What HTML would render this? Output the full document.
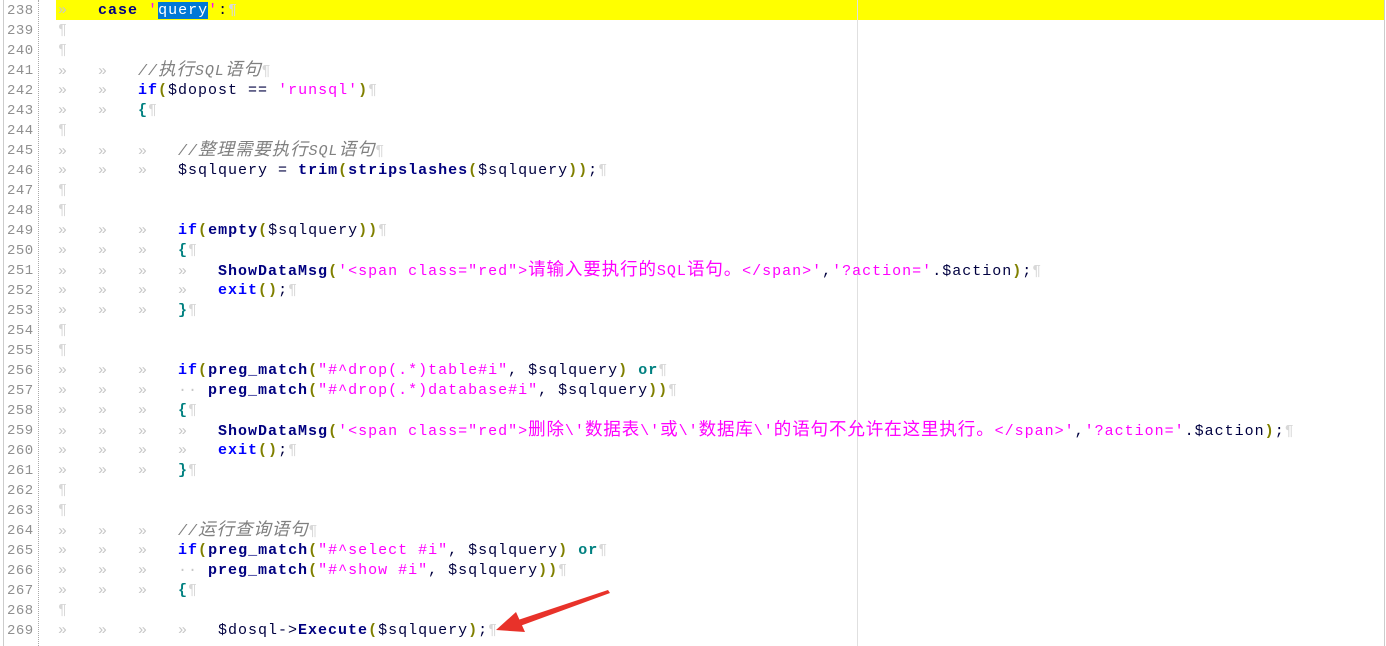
<!DOCTYPE html>
<html><head><meta charset="utf-8"><style>
body{margin:0;width:1386px;height:646px;overflow:hidden;background:#fff;position:relative;font-family:"Liberation Mono","Noto Sans CJK SC",monospace}
.g{position:absolute;left:3px;top:0;width:1px;height:646px;background:#ccc}
.d{position:absolute;left:38px;top:0;height:646px;border-left:1px dotted #aaa}
.e{position:absolute;left:857px;top:0;width:1px;height:646px;background:#e0e0e0}
.r{position:absolute;left:1384px;top:0;width:1px;height:646px;background:#ccc}
.hl{position:absolute;left:56px;top:0;width:1328px;height:20px;background:#ffff00}
.n{position:absolute;left:7px;width:31px;font-size:14px;color:#909090;line-height:20px;letter-spacing:0.5px}
.l{position:absolute;left:58px;white-space:pre;font-size:15px;letter-spacing:1px;line-height:20px;color:#000040}
.t{color:#c8c8c8;font-weight:normal}
.p{color:#d8d8d8}
.k{color:#000080;font-weight:bold}
.b{color:#0000ff;font-weight:bold}
.s{color:#ff00ff}
.c{color:#808080;font-style:italic}
.o{color:#808000;font-weight:bold}
.or{color:#008080;font-weight:bold}
.z{font-size:17.5px;letter-spacing:0.9px}
.sel{background:#0078d7;color:#fff}
</style></head><body>
<div class="hl"></div><div class="g"></div><div class="d"></div><div class="e"></div><div class="r"></div>
<div class="n" style="top:1px">238</div><div class="n" style="top:21px">239</div><div class="n" style="top:41px">240</div><div class="n" style="top:61px">241</div><div class="n" style="top:81px">242</div><div class="n" style="top:101px">243</div><div class="n" style="top:121px">244</div><div class="n" style="top:141px">245</div><div class="n" style="top:161px">246</div><div class="n" style="top:181px">247</div><div class="n" style="top:201px">248</div><div class="n" style="top:221px">249</div><div class="n" style="top:241px">250</div><div class="n" style="top:261px">251</div><div class="n" style="top:281px">252</div><div class="n" style="top:301px">253</div><div class="n" style="top:321px">254</div><div class="n" style="top:341px">255</div><div class="n" style="top:361px">256</div><div class="n" style="top:381px">257</div><div class="n" style="top:401px">258</div><div class="n" style="top:421px">259</div><div class="n" style="top:441px">260</div><div class="n" style="top:461px">261</div><div class="n" style="top:481px">262</div><div class="n" style="top:501px">263</div><div class="n" style="top:521px">264</div><div class="n" style="top:541px">265</div><div class="n" style="top:561px">266</div><div class="n" style="top:581px">267</div><div class="n" style="top:601px">268</div><div class="n" style="top:621px">269</div>
<div class="l" style="top:1px"><span class="t">»   </span><span class="k">case</span> <span class="s">'<span class="sel">query</span>'</span>:<span class="p">¶</span></div>
<div class="l" style="top:21px"><span class="p">¶</span></div>
<div class="l" style="top:41px"><span class="p">¶</span></div>
<div class="l" style="top:61px"><span class="t">»   »   </span><span class="c">//<span class="z">执行</span>SQL<span class="z">语句</span></span><span class="p">¶</span></div>
<div class="l" style="top:81px"><span class="t">»   »   </span><span class="b">if</span><span class="o">(</span>$dopost == <span class="s">'runsql'</span><span class="o">)</span><span class="p">¶</span></div>
<div class="l" style="top:101px"><span class="t">»   »   </span><span class="or">{</span><span class="p">¶</span></div>
<div class="l" style="top:121px"><span class="p">¶</span></div>
<div class="l" style="top:141px"><span class="t">»   »   »   </span><span class="c">//<span class="z">整理需要执行</span>SQL<span class="z">语句</span></span><span class="p">¶</span></div>
<div class="l" style="top:161px"><span class="t">»   »   »   </span>$sqlquery = <span class="k">trim</span><span class="o">(</span><span class="k">stripslashes</span><span class="o">(</span>$sqlquery<span class="o">))</span>;<span class="p">¶</span></div>
<div class="l" style="top:181px"><span class="p">¶</span></div>
<div class="l" style="top:201px"><span class="p">¶</span></div>
<div class="l" style="top:221px"><span class="t">»   »   »   </span><span class="b">if</span><span class="o">(</span><span class="k">empty</span><span class="o">(</span>$sqlquery<span class="o">))</span><span class="p">¶</span></div>
<div class="l" style="top:241px"><span class="t">»   »   »   </span><span class="or">{</span><span class="p">¶</span></div>
<div class="l" style="top:261px"><span class="t">»   »   »   »   </span><span class="k">ShowDataMsg</span><span class="o">(</span><span class="s">'&lt;span class="red"&gt;<span class="z">请输入要执行的</span>SQL<span class="z">语句。</span>&lt;/span&gt;'</span>,<span class="s">'?action='</span>.$action<span class="o">)</span>;<span class="p">¶</span></div>
<div class="l" style="top:281px"><span class="t">»   »   »   »   </span><span class="b">exit</span><span class="o">()</span>;<span class="p">¶</span></div>
<div class="l" style="top:301px"><span class="t">»   »   »   </span><span class="or">}</span><span class="p">¶</span></div>
<div class="l" style="top:321px"><span class="p">¶</span></div>
<div class="l" style="top:341px"><span class="p">¶</span></div>
<div class="l" style="top:361px"><span class="t">»   »   »   </span><span class="b">if</span><span class="o">(</span><span class="k">preg_match</span><span class="o">(</span><span class="s">"#^drop(.*)table#i"</span>, $sqlquery<span class="o">)</span> <span class="or">or</span><span class="p">¶</span></div>
<div class="l" style="top:381px"><span class="t">»   »   »   ··</span> <span class="k">preg_match</span><span class="o">(</span><span class="s">"#^drop(.*)database#i"</span>, $sqlquery<span class="o">))</span><span class="p">¶</span></div>
<div class="l" style="top:401px"><span class="t">»   »   »   </span><span class="or">{</span><span class="p">¶</span></div>
<div class="l" style="top:421px"><span class="t">»   »   »   »   </span><span class="k">ShowDataMsg</span><span class="o">(</span><span class="s">'&lt;span class="red"&gt;<span class="z">删除</span>\'<span class="z">数据表</span>\'<span class="z">或</span>\'<span class="z">数据库</span>\'<span class="z">的语句不允许在这里执行。</span>&lt;/span&gt;'</span>,<span class="s">'?action='</span>.$action<span class="o">)</span>;<span class="p">¶</span></div>
<div class="l" style="top:441px"><span class="t">»   »   »   »   </span><span class="b">exit</span><span class="o">()</span>;<span class="p">¶</span></div>
<div class="l" style="top:461px"><span class="t">»   »   »   </span><span class="or">}</span><span class="p">¶</span></div>
<div class="l" style="top:481px"><span class="p">¶</span></div>
<div class="l" style="top:501px"><span class="p">¶</span></div>
<div class="l" style="top:521px"><span class="t">»   »   »   </span><span class="c">//<span class="z">运行查询语句</span></span><span class="p">¶</span></div>
<div class="l" style="top:541px"><span class="t">»   »   »   </span><span class="b">if</span><span class="o">(</span><span class="k">preg_match</span><span class="o">(</span><span class="s">"#^select #i"</span>, $sqlquery<span class="o">)</span> <span class="or">or</span><span class="p">¶</span></div>
<div class="l" style="top:561px"><span class="t">»   »   »   ··</span> <span class="k">preg_match</span><span class="o">(</span><span class="s">"#^show #i"</span>, $sqlquery<span class="o">))</span><span class="p">¶</span></div>
<div class="l" style="top:581px"><span class="t">»   »   »   </span><span class="or">{</span><span class="p">¶</span></div>
<div class="l" style="top:601px"><span class="p">¶</span></div>
<div class="l" style="top:621px"><span class="t">»   »   »   »   </span>$dosql-&gt;<span class="k">Execute</span><span class="o">(</span>$sqlquery<span class="o">)</span>;<span class="p">¶</span></div>
<svg style="position:absolute;left:0;top:0" width="1386" height="646"><polygon points="608,590 518,620 520,626 610,593" fill="#e8322a"/><polygon points="496,630 516,612 525,632" fill="#e8322a"/></svg>
</body></html>
